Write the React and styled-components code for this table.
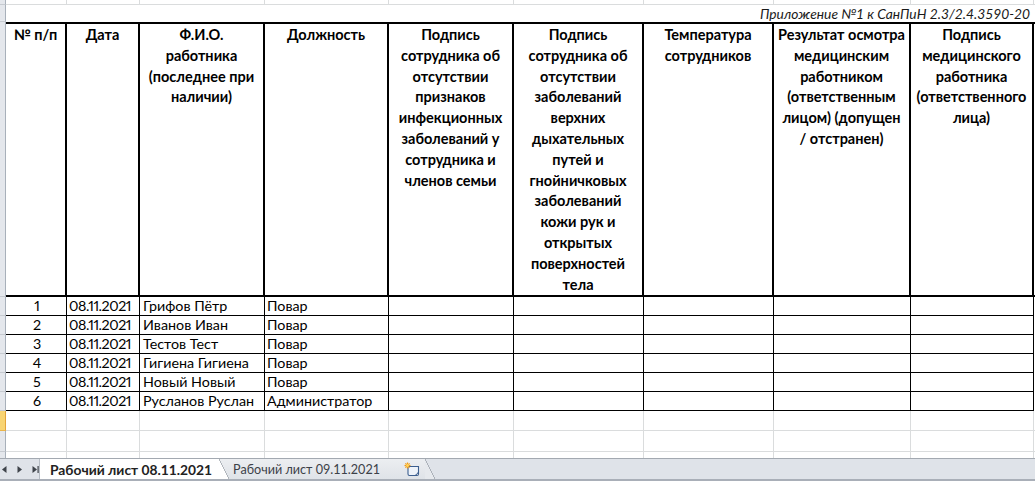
import React from 'react';
import styled, { createGlobalStyle, css } from 'styled-components';

const GlobalStyle = createGlobalStyle`
  html, body {
    margin: 0;
    padding: 0;
    height: 100%;
    overflow: hidden;
    background: #fff;
  }
  body {
    font-family: Lato, 'Noto Sans', sans-serif;
    color: #000;
  }
  #root {
    height: 100%;
  }
`;

const COLS = '6px 61px 73px 125px 124px 125px 130px 130px 137px 123px 1fr';

const HEAD = [
  ['№ п/п'],
  ['Дата'],
  ['Ф.И.О.', 'работника', '(последнее при', 'наличии)'],
  ['Должность'],
  ['Подпись', 'сотрудника об', 'отсутствии', 'признаков', 'инфекционных', 'заболеваний у', 'сотрудника и', 'членов семьи'],
  ['Подпись', 'сотрудника об', 'отсутствии', 'заболеваний', 'верхних', 'дыхательных', 'путей и', 'гнойничковых', 'заболеваний', 'кожи рук и', 'открытых', 'поверхностей', 'тела'],
  ['Температура', 'сотрудников'],
  ['Результат осмотра', 'медицинским', 'работником', '(ответственным', 'лицом) (допущен', '/ отстранен)'],
  ['Подпись', 'медицинского', 'работника', '(ответственного', 'лица)'],
];

const ROWS = [
  { n: 1, date: '08.11.2021', name: 'Грифов Пётр', pos: 'Повар' },
  { n: 2, date: '08.11.2021', name: 'Иванов Иван', pos: 'Повар' },
  { n: 3, date: '08.11.2021', name: 'Тестов Тест', pos: 'Повар' },
  { n: 4, date: '08.11.2021', name: 'Гигиена Гигиена', pos: 'Повар' },
  { n: 5, date: '08.11.2021', name: 'Новый Новый', pos: 'Повар' },
  { n: 6, date: '08.11.2021', name: 'Русланов Руслан', pos: 'Администратор' },
];

const Window = styled.div`
  display: flex;
  flex-direction: column;
  height: 100vh;
`;

const Sheet = styled.div`
  flex: 1;
  overflow: hidden;
  display: flex;
  flex-direction: column;
`;

const Row = styled.div`
  display: grid;
  grid-template-columns: ${COLS};
  height: ${p => p.$h}px;
  flex-shrink: 0;
`;

const RowHead = styled.div`
  box-sizing: border-box;
  background: ${p => (p.$selected ? '#f8d472' : '#e4e7ec')};
  border-bottom: 1px solid ${p => (p.$selected ? '#eab54a' : '#c6cad0')};
  border-right: 1px solid ${p => (p.$selected ? '#e3a43a' : '#a8b0ba')};
`;

const Cell = styled.div`
  box-sizing: border-box;
  overflow: hidden;
  white-space: nowrap;
  font-size: 14.3px;
  line-height: 18px;
  font-variant-numeric: proportional-nums;
  letter-spacing: ${p => (p.$tight ? '-0.45px' : '0')};
  display: flex;
  align-items: center;
  padding: 0 1px 0 ${p => (p.$pad ? p.$pad : 3)}px;
  justify-content: ${p => (p.$center ? 'center' : 'flex-start')};
  ${p =>
    p.$kind === 'grid' &&
    css`
      border-right: 1px solid #dadcdd;
      border-bottom: 1px solid #dadcdd;
    `}
  ${p =>
    p.$kind === 'data' &&
    css`
      border-right: 1px solid #000;
      border-bottom: 1px solid #000;
    `}
`;

const Caption = styled.div`
  grid-column: 2 / -1;
  text-align: right;
  padding-right: 5px;
  font-style: italic;
  font-size: 13.8px;
  line-height: 17px;
  color: #1a1a1a;
  white-space: nowrap;
`;

const HeadCell = styled.div`
  box-sizing: border-box;
  border-top: 2px solid #000;
  border-bottom: 2px solid #000;
  border-right: ${p => (p.$tail ? '0' : '2px solid #000')};
  padding-top: 1px;
  text-align: center;
  font-weight: 700;
  font-size: 14.5px;
  line-height: 20.8px;
`;

const Line = styled.span`
  display: block;
  white-space: nowrap;
`;

const TabBar = styled.div`
  height: 23px;
  flex-shrink: 0;
  box-sizing: border-box;
  display: flex;
  align-items: stretch;
  background: #dfe3e9;
  border-top: 1px solid #a3a9b1;
  border-bottom: 2px solid #a9afb8;
`;

const Nav = styled.div`
  width: 40px;
  display: flex;
  align-items: center;
  gap: 6px;
  border-right: 1px solid #b7bdc5;
  box-sizing: border-box;
`;

const Tab = styled.div`
  position: relative;
  display: flex;
  align-items: center;
  padding: 0 ${p => (p.$active ? '7px' : '12px')} 0 ${p => (p.$active ? '10px' : '14px')};
  font-size: ${p => (p.$active ? '13.8px' : '12.6px')};
  font-weight: ${p => (p.$active ? 700 : 400)};
  color: ${p => (p.$active ? '#222' : '#3c4148')};
  background: ${p => (p.$active ? '#fff' : 'linear-gradient(#eceef1, #dfe3e8)')};
  white-space: nowrap;
  z-index: ${p => (p.$active ? 2 : 1)};
  &::after {
    content: '';
    position: absolute;
    top: 0;
    bottom: 0;
    right: -10px;
    width: 10px;
    background: linear-gradient(
      to top right,
      ${p => (p.$active ? '#fff' : '#e6e9ed')} calc(50% - 0.6px),
      #8c939c 50%,
      transparent calc(50% + 0.6px)
    );
  }
`;

const NewTab = styled(Tab)`
  padding: 0 4px 0 12px;
`;

const Arrow = ({ dir, bar }) => (
  <svg width="9" height="9" viewBox="0 0 9 9">
    {dir === 'left' ? (
      <path d="M6.5 1 L2 4.5 L6.5 8 Z" fill="#3e434a" />
    ) : (
      <path d="M2.5 1 L7 4.5 L2.5 8 Z" fill="#3e434a" />
    )}
    {bar && <rect x="7.5" y="1" width="1.2" height="7" fill="#3e434a" />}
  </svg>
);

const NewSheetIcon = () => (
  <svg width="17" height="15" viewBox="0 0 17 15">
    <path d="M4 4.5 H14.5 V12 Q14.5 13.5 13 13.5 H5.5 Q4 13.5 4 12 Z" fill="#eef3fa" stroke="#3d5f8f" strokeWidth="1.1" />
    <path d="M11 13.5 Q13 12.5 14.5 10" fill="none" stroke="#3d5f8f" strokeWidth="1" />
    <g stroke="#f29b18" strokeWidth="1.2">
      <line x1="3.5" y1="0.5" x2="3.5" y2="6.5" />
      <line x1="0.5" y1="3.5" x2="6.5" y2="3.5" />
      <line x1="1.4" y1="1.4" x2="5.6" y2="5.6" />
      <line x1="5.6" y1="1.4" x2="1.4" y2="5.6" />
    </g>
    <circle cx="3.5" cy="3.5" r="1.4" fill="#ffd45a" />
  </svg>
);

const blanks = n => Array.from({ length: n }, (_, i) => <Cell key={i} $kind="grid" />);

const GridRow = ({ h, selected }) => (
  <Row $h={h}>
    <RowHead $selected={selected} />
    {blanks(10)}
  </Row>
);

export default function App() {
  return (
    <Window>
      <GlobalStyle />
      <Sheet>
        <GridRow h={5} />
        <Row $h={17}>
          <RowHead />
          <Caption>Приложение №1 к СанПиН 2.3/2.4.3590-20</Caption>
        </Row>
        <Row $h={275}>
          <RowHead />
          {HEAD.map((lines, i) => (
            <HeadCell key={i}>
              {lines.map(l => (
                <Line key={l}>{l}</Line>
              ))}
            </HeadCell>
          ))}
          <HeadCell $tail />
        </Row>
        {ROWS.map(r => (
          <Row $h={19} key={r.n}>
            <RowHead />
            <Cell $kind="data" $center>
              {r.n}
            </Cell>
            <Cell $kind="data" $tight $pad={2}>
              {r.date}
            </Cell>
            <Cell $kind="data">{r.name}</Cell>
            <Cell $kind="data" $pad={2}>
              {r.pos}
            </Cell>
            <Cell $kind="data" />
            <Cell $kind="data" />
            <Cell $kind="data" />
            <Cell $kind="data" />
            <Cell $kind="data" />
            <Cell />
          </Row>
        ))}
        <GridRow h={20} selected />
        <GridRow h={21} />
        <GridRow h={20} />
      </Sheet>
      <TabBar>
        <Nav>
          <Arrow dir="left" />
          <Arrow dir="right" />
          <Arrow dir="right" bar />
        </Nav>
        <Tab $active>Рабочий лист 08.11.2021</Tab>
        <Tab>Рабочий лист 09.11.2021</Tab>
        <NewTab>
          <NewSheetIcon />
        </NewTab>
      </TabBar>
    </Window>
  );
}
